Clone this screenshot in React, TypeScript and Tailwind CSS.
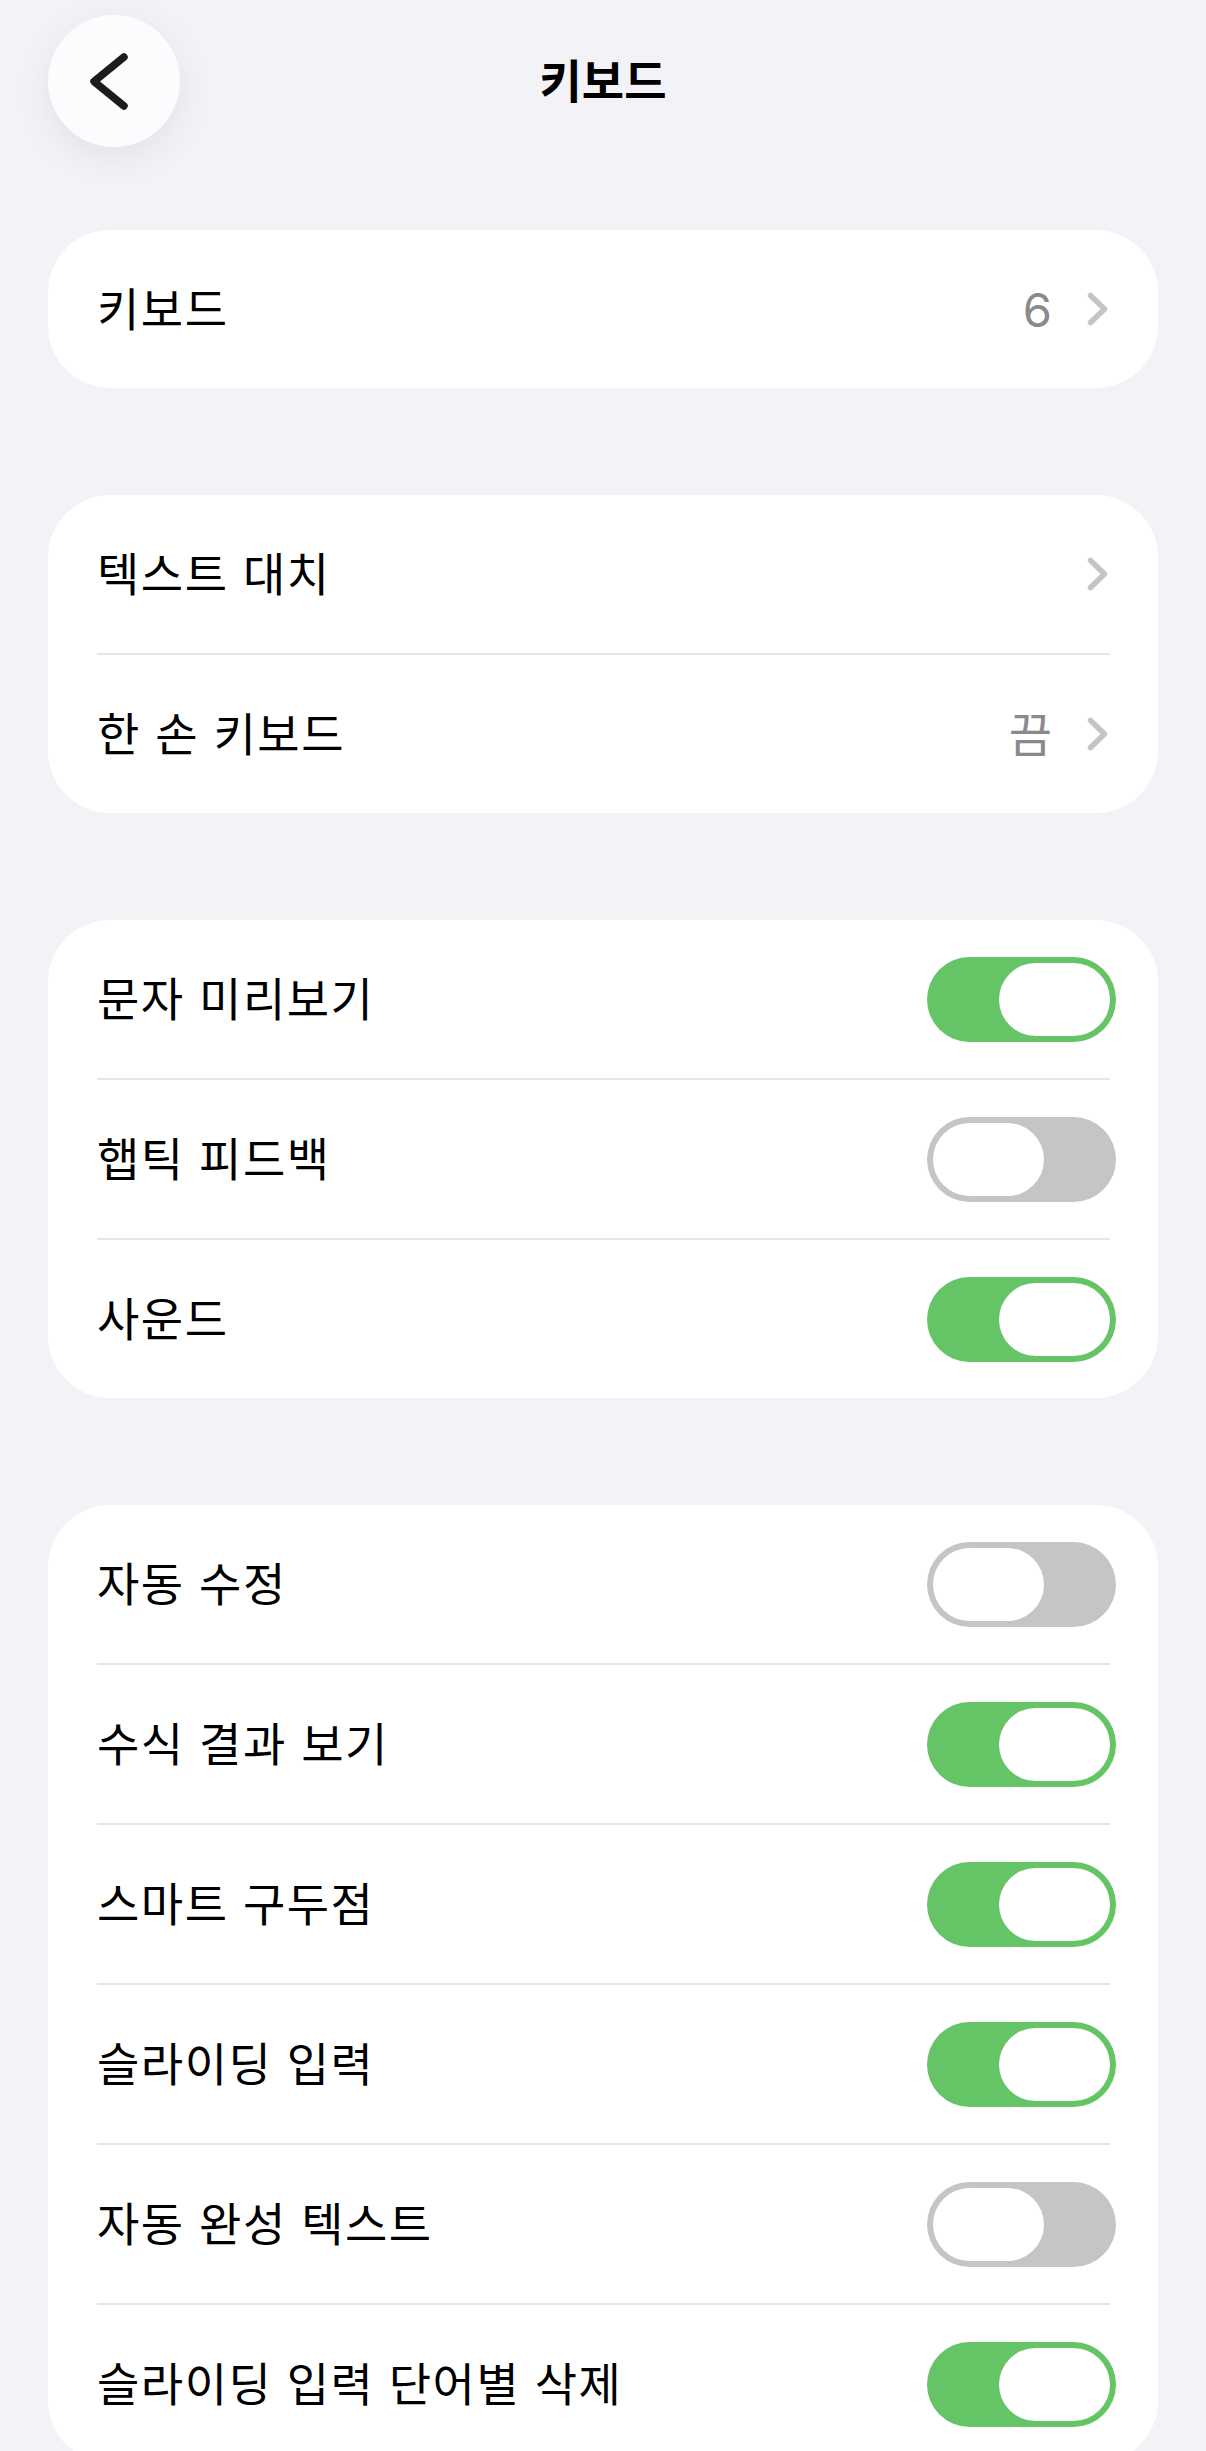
import React from "react";

const FONT = "font-['Inter','Noto_Sans_CJK_KR',sans-serif]";

function Chevron() {
  return (
    <svg width="21" height="34" viewBox="0 0 21 34" fill="none" className="shrink-0">
      <path d="M3.5 3.5 L17.5 17 L3.5 30.5" stroke="#c4c4c7" strokeWidth="5.5" strokeLinecap="round" strokeLinejoin="round" />
    </svg>
  );
}

function Toggle({ on }: { on: boolean }) {
  return (
    <div
      className={`flex h-[85px] w-[189px] items-center rounded-full p-[6px] ${
        on ? "justify-end bg-[#65c466]" : "justify-start bg-[#c5c5c7]"
      }`}
    >
      <div className="h-[73px] w-[111px] rounded-full bg-white" />
    </div>
  );
}

type Row =
  | { label: string; kind: "link"; value?: string }
  | { label: string; kind: "toggle"; on: boolean };

function Card({ rows }: { rows: Row[] }) {
  return (
    <div className="overflow-hidden rounded-[62px] bg-white">
      {rows.map((r, i) => (
        <div key={r.label}>
          {i > 0 && <div className="ml-[49px] mr-[48px] h-[2px] bg-[#e6e6ea]" />}
          <div className="flex h-[158px] items-center justify-between pl-[49px] pr-[42px]">
            <span className="text-[46px] leading-none tracking-[1.5px] text-black">{r.label}</span>
            {r.kind === "link" ? (
              <div className="mr-[8px] flex items-center gap-[35px]">
                {r.value && <span className="text-[47px] leading-none text-[#8a8a8e]">{r.value}</span>}
                <Chevron />
              </div>
            ) : (
              <Toggle on={r.on} />
            )}
          </div>
        </div>
      ))}
    </div>
  );
}

export default function App() {
  return (
    <div className={`min-h-screen bg-[#f2f2f7] px-[48px] pt-[15px] pb-[40px] ${FONT}`}>
      <div className="grid grid-cols-[132px_1fr_132px] items-center">
        <div className="flex h-[132px] w-[132px] items-center justify-center rounded-full bg-[#fcfcfe] shadow-[0_10px_36px_rgba(0,0,0,0.07)]">
          <svg width="132" height="132" viewBox="0 0 132 132" fill="none">
            <path d="M76 42 L46 66.5 L76 91" stroke="#1c1c1e" strokeWidth="7.5" strokeLinecap="round" strokeLinejoin="round" />
          </svg>
        </div>
        <h1 className="text-center text-[46px] font-semibold leading-none text-black">키보드</h1>
        <div />
      </div>

      <div className="mt-[83px] flex flex-col gap-[107px]">
        <Card rows={[{ label: "키보드", kind: "link", value: "6" }]} />
        <Card
          rows={[
            { label: "텍스트 대치", kind: "link" },
            { label: "한 손 키보드", kind: "link", value: "끔" },
          ]}
        />
        <Card
          rows={[
            { label: "문자 미리보기", kind: "toggle", on: true },
            { label: "햅틱 피드백", kind: "toggle", on: false },
            { label: "사운드", kind: "toggle", on: true },
          ]}
        />
        <Card
          rows={[
            { label: "자동 수정", kind: "toggle", on: false },
            { label: "수식 결과 보기", kind: "toggle", on: true },
            { label: "스마트 구두점", kind: "toggle", on: true },
            { label: "슬라이딩 입력", kind: "toggle", on: true },
            { label: "자동 완성 텍스트", kind: "toggle", on: false },
            { label: "슬라이딩 입력 단어별 삭제", kind: "toggle", on: true },
          ]}
        />
      </div>
    </div>
  );
}
